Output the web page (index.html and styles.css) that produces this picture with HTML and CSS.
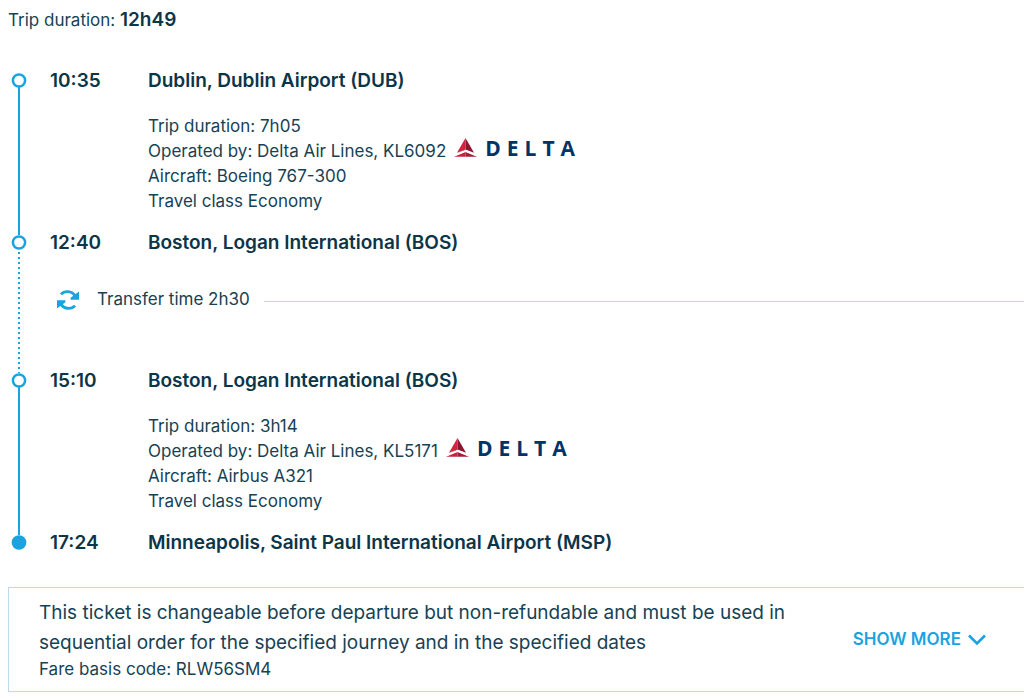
FILE: index.html
```html
<!DOCTYPE html>
<html lang="en">

<head>
  <meta charset="UTF-8">
  <meta name="viewport" content="width=device-width, initial-scale=1.0">
  <title>Trip details</title>
  <link rel="stylesheet" href="styles.css">
</head>

<body>
  <svg class="sprite" aria-hidden="true">
    <symbol id="delta" viewBox="0 0 23 19">
      <path fill="#d0243f" d="M11.5 0 V11.4 L3 14.8 Z" />
      <path fill="#8e1530" d="M11.5 0 L20 14.8 L11.5 11.4 Z" />
      <path fill="#d0243f" d="M2.6 15.2 L11.5 11.2 V12 Z" />
      <path fill="#c8213c" d="M0 18.8 L11.5 14 V18.8 Z" />
      <path fill="#a51c36" d="M23 18.8 L11.5 14 V18.8 Z" />
      <path fill="none" stroke="#fff" stroke-width="1.4" d="M2 16.8 L11.5 12.8 L21 16.8" />
    </symbol>
    <symbol id="dot" viewBox="0 0 16 16">
      <circle cx="8" cy="7.5" r="6.1" stroke="#1ba3e0" stroke-width="2.5" />
    </symbol>
  </svg>

  <main class="trip">
    <p class="trip__total">Trip duration: <strong>12h49</strong></p>

    <ol class="route">
      <li class="stop">
        <div class="rail"><svg class="rail__dot" aria-hidden="true"><use href="#dot" /></svg><span class="rail__line"></span></div>
        <time class="stop__time">10:35</time>
        <div class="stop__body">
          <h2 class="stop__name">Dublin, Dublin Airport (DUB)</h2>
          <ul class="details">
            <li>Trip duration: 7h05</li>
            <li class="details__carrier">
              Operated by: Delta Air Lines, KL6092
              <span class="airline"><svg class="airline__mark" aria-hidden="true"><use href="#delta" /></svg>DELTA</span>
            </li>
            <li>Aircraft: Boeing 767-300</li>
            <li>Travel class Economy</li>
          </ul>
        </div>
      </li>

      <li class="stop">
        <div class="rail"><svg class="rail__dot" aria-hidden="true"><use href="#dot" /></svg><span class="rail__line rail__line--dotted"></span></div>
        <time class="stop__time">12:40</time>
        <div class="stop__body">
          <h2 class="stop__name">Boston, Logan International (BOS)</h2>
        </div>
        <div class="transfer">
          <svg class="transfer__icon" viewBox="0 0 24 20" aria-hidden="true">
            <path fill="none" stroke="#1ba3e0" stroke-width="2.8" d="M5 4.4 C8.5 .5 15.5 .5 19 5.6 M19 15.6 C15.5 19.5 8.5 19.5 5 14.4" />
            <path fill="#1ba3e0" d="M23 1.6 V9.8 H14.6 V7.8 Z M1 18.4 V10.2 H9.4 V12.2 Z" />
          </svg>
          <span>Transfer time 2h30</span>
          <span class="transfer__line"></span>
        </div>
      </li>

      <li class="stop">
        <div class="rail"><svg class="rail__dot" aria-hidden="true"><use href="#dot" /></svg><span class="rail__line"></span></div>
        <time class="stop__time">15:10</time>
        <div class="stop__body">
          <h2 class="stop__name">Boston, Logan International (BOS)</h2>
          <ul class="details">
            <li>Trip duration: 3h14</li>
            <li class="details__carrier">
              Operated by: Delta Air Lines, KL5171
              <span class="airline"><svg class="airline__mark" aria-hidden="true"><use href="#delta" /></svg>DELTA</span>
            </li>
            <li>Aircraft: Airbus A321</li>
            <li>Travel class Economy</li>
          </ul>
        </div>
      </li>

      <li class="stop">
        <div class="rail"><svg class="rail__dot rail__dot--end" aria-hidden="true"><use href="#dot" /></svg></div>
        <time class="stop__time">17:24</time>
        <div class="stop__body">
          <h2 class="stop__name">Minneapolis, Saint Paul International Airport (MSP)</h2>
        </div>
      </li>
    </ol>

    <section class="fare">
      <div class="fare__text">
        <p class="fare__rules">This ticket is changeable before departure but non-refundable and must be used in sequential order for the specified journey and in the specified dates</p>
        <p class="fare__code">Fare basis code: RLW56SM4</p>
      </div>
      <button class="more" type="button">
        SHOW MORE
        <svg class="more__icon" viewBox="0 0 18 12" aria-hidden="true">
          <path fill="none" stroke="#1ba3e0" stroke-width="2.6" d="M1 1.5 L9 9.5 L17 1.5" />
        </svg>
      </button>
    </section>
  </main>
</body>

</html>
```
FILE: styles.css
```css
* {
  box-sizing: border-box;
}

body {
  margin: 0;
  background: #fff;
  color: #174253;
  font-family: Inter, "Liberation Sans", sans-serif;
  font-size: 17px;
  line-height: 25px;
}

h2,
p,
ol,
ul {
  margin: 0;
  padding: 0;
  list-style: none;
}

.sprite {
  display: none;
}

.trip {
  padding: 7px 0 0 8px;
}

.trip__total strong {
  color: #0b3548;
  font-size: 19px;
  font-weight: 600;
}

.route {
  margin-top: 40px;
}

.stop {
  display: grid;
  grid-template-columns: 42px 98px 1fr;
  grid-template-rows: auto 1fr;
}

.rail {
  grid-row: 1 / 3;
  width: 22px;
  display: flex;
  flex-direction: column;
  align-items: center;
}

.rail__dot {
  width: 16px;
  height: 16px;
  fill: none;
}

.rail__dot--end {
  fill: #1ba3e0;
}

.rail__line {
  flex: 1;
  width: 2px;
  margin-top: -2px;
  background: #1ba3e0;
}

.rail__line--dotted {
  background: repeating-linear-gradient(transparent 0 3px, #1ba3e0 3px 5px);
}

.stop__time,
.stop__name {
  color: #0b3548;
  font-size: 19px;
  font-weight: 600;
  line-height: 16px;
}

.details {
  padding: 25px 0 21px;
}

.details__carrier {
  display: flex;
  align-items: center;
  gap: 8px;
}

.airline {
  display: flex;
  align-items: center;
  gap: 8px;
  margin: -4px 0 4px;
  color: #003366;
  font-family: "Open Sans", sans-serif;
  font-size: 21px;
  font-weight: 700;
  line-height: 20px;
  letter-spacing: 6px;
}

.airline__mark {
  width: 23px;
  height: 19px;
}

.transfer {
  grid-column: 2 / 4;
  display: flex;
  align-items: center;
  padding: 36px 0 61px 6px;
}

.transfer__icon {
  width: 24px;
  height: 20px;
  margin-right: 17px;
}

.transfer__line {
  flex: 1;
  height: 1px;
  margin: 3px 0 0 14px;
  background: #b9dcea;
}

.fare {
  display: flex;
  align-items: center;
  gap: 32px;
  margin-top: 36px;
  padding: 10px 38px 10px 30px;
  border: 1px solid #b9dcea;
  border-right: 0;
}

.fare__text {
  flex: 1;
}

.fare__rules {
  font-size: 19px;
  line-height: 30px;
}

.fare__code {
  line-height: 23px;
}

.more {
  display: flex;
  align-items: center;
  gap: 7px;
  padding: 0;
  border: 0;
  background: none;
  color: #1ba3e0;
  font: inherit;
  font-weight: 600;
  cursor: pointer;
}

.more__icon {
  width: 18px;
  height: 12px;
}
```
